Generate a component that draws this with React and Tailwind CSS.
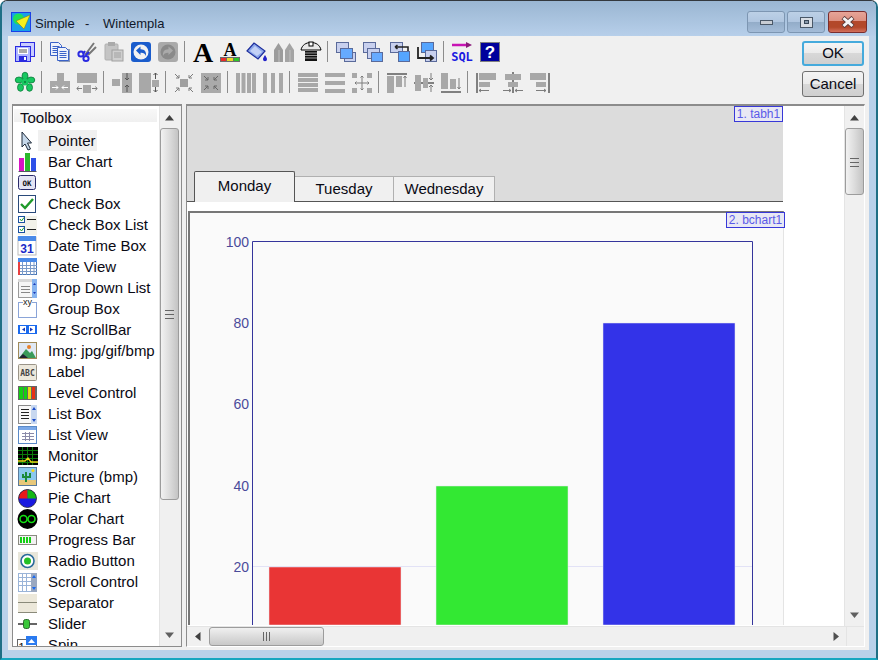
import React from "react";

const BLUE = "#2a2ae0";
const GR = "#a8a8a8";
const DK = "#7c7c7c";

function Ico({ children, h = 20 }) {
  return (
    <svg width="20" height={h} viewBox={`0 0 20 ${h}`} className="shrink-0 overflow-visible">
      {children}
    </svg>
  );
}

function Sep() {
  return <div className="w-px bg-[#8c8c8c] ml-[6px] mr-[8px] self-stretch" />;
}

// ---- main toolbar icons ----
const Save = () => (
  <Ico>
    <rect x="5.5" y="0.5" width="14" height="14" fill="#c9ccff" stroke={BLUE} />
    <rect x="0.5" y="4.5" width="15" height="15" fill="#aeb6ff" stroke={BLUE} />
    <rect x="3" y="6" width="10" height="6" fill="#fff" />
    <path d="M4 8h8M4 10h8" stroke="#555" />
    <rect x="4" y="14" width="8" height="5" fill={BLUE} />
    <rect x="9" y="15" width="2" height="3" fill="#fff" />
  </Ico>
);
const Doc = ({ x, y }) => (
  <g>
    <path d={`M${x} ${y}h8l3 3v10h-11z`} fill="#eef2fb" stroke="#3a62c8" />
    <path d={`M${x + 2} ${y + 4}h7M${x + 2} ${y + 6}h7M${x + 2} ${y + 8}h7M${x + 2} ${y + 10}h7`} stroke="#3a62c8" />
  </g>
);
const Copy = () => (
  <Ico>
    <Doc x={0.5} y={0.5} />
    <rect x="9" y="7" width="11" height="13" fill="#8d9bb8" />
    <Doc x={7.5} y={5.5} />
  </Ico>
);
const Scissors = () => (
  <Ico>
    <path d="M8 13L17 1M11 13L19 5" stroke="#777" strokeWidth="2" />
    <path d="M8 9L6 12M12 10L9 13" stroke={BLUE} strokeWidth="2" />
    <circle cx="4" cy="12" r="2.6" fill="none" stroke={BLUE} strokeWidth="2" />
    <circle cx="9" cy="16.5" r="2.6" fill="none" stroke={BLUE} strokeWidth="2" />
  </Ico>
);
const Paste = () => (
  <Ico>
    <rect x="1" y="2" width="13" height="16" rx="1" fill="#c4c4c4" stroke="#b0b0b0" />
    <rect x="4" y="0" width="7" height="4" fill="#aaa" />
    <rect x="8" y="8" width="11" height="11" fill="#cfcfcf" stroke="#a0a0a0" />
    <path d="M10 11h7M10 13h7M10 15h7" stroke="#a0a0a0" />
  </Ico>
);
const Round = ({ bg, fg, flip }) => (
  <Ico>
    <rect width="20" height="20" rx="3" fill={bg} />
    <circle cx="10" cy="10" r="7.5" fill={flip ? "#8a8a8a" : "#f2f2f2"} />
    <g transform={flip ? "translate(20 0) scale(-1 1)" : undefined}>
      <path d="M5 8.5l4.5-4v2.8c4-.2 6 2.6 5.5 6.7-1-2.4-2.6-3.4-5.5-3.2v2.2z" fill={fg} />
    </g>
  </Ico>
);
const BigA = () => (
  <Ico>
    <text x="10" y="20" textAnchor="middle" fontFamily="'Liberation Serif',serif" fontWeight="700" fontSize="28" fill="#000">A</text>
  </Ico>
);
const ColorA = () => (
  <Ico>
    <text x="10" y="14" textAnchor="middle" fontFamily="'Liberation Serif',serif" fontWeight="700" fontSize="18" fill="#000">A</text>
    <rect x="0" y="15" width="20" height="5" fill="#6b6b6b" />
    <rect x="1" y="16" width="5" height="3" fill="#e82a2a" />
    <rect x="7" y="16" width="6" height="3" fill="#e8d82a" />
    <rect x="14" y="16" width="5" height="3" fill="#2ac82a" />
  </Ico>
);
const Bucket = () => (
  <Ico>
    <path d="M0 9L7 1l11 8-7 8z" fill="#8aa6ea" stroke="#1e2e9c" strokeWidth="1.2" />
    <path d="M3 9l5-5 7 6-5 4z" fill="#dbe4fb" opacity="0.7" />
    <path d="M18 13c-1.5 2.5-2 3.2-2 4.2a2 2 0 0 0 4 0c0-1-.5-1.7-2-4.2z" fill="#2222c8" />
  </Ico>
);
const Crayons = () => (
  <Ico>
    <path d="M0 20V8l4.500-7L9 8v12z" fill="#9c9c9c" />
    <path d="M11 20V8l4.500-7L20 8v12z" fill="#a4a4a4" />
    <path d="M5 8v12M16 8v12" stroke="#c0c0c0" />
  </Ico>
);
const Screw = () => (
  <Ico>
    <path d="M0 8c1-5 5-7.500 10-7.500S19 3 20 8z" fill="#e8e8e8" stroke="#000" />
    <rect x="8" y="0" width="4" height="4" fill="#fff" stroke="#000" />
    <rect x="4" y="9" width="12" height="10" fill="#111" />
    <path d="M4 11h12M4 13.500h12M4 16h12" stroke="#999" />
  </Ico>
);
const Win = ({ x, y, w = 12, h = 10, fill, stroke = "#5a6a9a" }) => (
  <rect x={x + 0.5} y={y + 0.5} width={w} height={h} fill={fill} stroke={stroke} />
);
const Layer1 = () => (
  <Ico>
    <Win x={0} y={0} fill="#c8d0ee" />
    <Win x={8} y={10} w={11} h={9} fill="#c8d0ee" />
    <Win x={4} y={6} fill="#66aaff" />
  </Ico>
);
const Layer2 = () => (
  <Ico>
    <Win x={0} y={0} fill="#c8d0ee" />
    <Win x={4} y={6} fill="#c8d0ee" />
    <Win x={8} y={10} w={11} h={9} fill="#66aaff" />
  </Ico>
);
const Layer3 = () => (
  <Ico>
    <Win x={0} y={0} fill="#c8d0ee" />
    <Win x={8} y={9} w={11} h={10} fill="#55a5ff" />
    <path d="M5 5h13v4M5 5l2.500-2M5 5l2.500 2" fill="none" stroke="#222" strokeWidth="1.6" />
  </Ico>
);
const Layer4 = () => (
  <Ico>
    <Win x={4} y={0} fill="#55a5ff" />
    <Win x={8} y={8} w={11} h={11} fill="#c8d0ee" />
    <path d="M1 5v11h14M13 13.500l3 2.500-3 2.500" fill="none" stroke="#222" strokeWidth="1.8" />
  </Ico>
);
const Sql = () => (
  <Ico>
    <path d="M0 3h15" stroke="#c814b4" strokeWidth="2.4" />
    <path d="M14 0l6 3-6 3z" fill="#8a1a7a" />
    <text x="10" y="19" textAnchor="middle" fontFamily="'DejaVu Sans Mono',monospace" fontWeight="700" fontSize="12" fill="#1a1ae0">SQL</text>
  </Ico>
);
const Help = () => (
  <Ico>
    <rect x="0.5" y="0.5" width="19" height="19" fill="#00009c" stroke="#808080" />
    <text x="10" y="16" textAnchor="middle" fontFamily="'Liberation Sans',sans-serif" fontWeight="700" fontSize="17" fill="#fff">?</text>
  </Ico>
);
const Flower = () => (
  <Ico>
    <g fill="#18c860" stroke="#0a7a3a" strokeWidth="0.8">
      <ellipse cx="10" cy="4" rx="3" ry="3.800" />
      <ellipse cx="16" cy="8" rx="3.800" ry="3" />
      <ellipse cx="14.500" cy="15.500" rx="3" ry="3.800" />
      <ellipse cx="5.500" cy="15.500" rx="3" ry="3.800" />
      <ellipse cx="4" cy="8" rx="3.800" ry="3" />
    </g>
    <circle cx="10" cy="10" r="3.500" fill="#18c860" />
    <circle cx="10" cy="10" r="1" fill="#0a7a3a" />
  </Ico>
);

// ---- gray layout icons ----
const Gray = ({ children }) => <Ico h={21}>{children}</Ico>;
const B = ({ x, y, w, h, f = GR }) => <rect x={x} y={y} width={w} height={h} fill={f} />;
const Ln = ({ d, c = DK, w = 1 }) => <path d={d} fill="none" stroke={c} strokeWidth={w} />;

const A1 = () => (
  <Gray>
    <B x={7} y={1} w={7} h={8} />
    <B x={0} y={9} w={20} h={12} />
    <Ln c="#fff" d="M2 15.500h6M6 13.500l2 2-2 2M18 15.500h-6M14 13.500l-2 2 2 2" />
  </Gray>
);
const A2 = () => (
  <Gray>
    <B x={0} y={1} w={20} h={10} />
    <B x={6} y={13} w={8} h={8} />
    <Ln d="M0 16.500h5M1.500 14.500l-1.500 2 1.500 2M15 16.500h5M18.500 14.500l1.500 2-1.500 2" />
  </Gray>
);
const A3 = () => (
  <Gray>
    <B x={0} y={7} w={8} h={7} />
    <B x={10} y={1} w={10} h={20} />
    <Ln c="#555" d="M15 1v7M13 6l2 2 2-2M15 20v-7M13 15l2-2 2 2" />
  </Gray>
);
const A4 = () => (
  <Gray>
    <B x={0} y={1} w={12} h={20} />
    <B x={13} y={8} w={7} h={7} />
    <Ln c="#555" d="M16.500 1v6M14.500 3l2-2 2 2M16.500 20v-5M14.500 18l2 2 2-2" />
  </Gray>
);
const A5 = () => (
  <Gray>
    <B x={6} y={7} w={8} h={8} f="#a0a0a0" />
    <Ln d="M1 2l4 4M5 3v3H2M19 2l-4 4M15 3v3h3M1 20l4-4M5 19v-3H2M19 20l-4-4M15 19v-3h3" />
  </Gray>
);
const A6 = () => (
  <Gray>
    <B x={0} y={1} w={20} h={20} f="#aaa" />
    <Ln c="#666" d="M3 4l4 4M7 5v3H4M17 4l-4 4M13 5v3h3M3 18l4-4M7 17v-3H4M17 18l-4-4M13 17v-3h3" />
  </Gray>
);
const Bars = ({ xs, w }) => (
  <Gray>
    {xs.map((x) => (
      <B key={x} x={x} y={1} w={w} h={20} />
    ))}
  </Gray>
);
const Rows = ({ ys, h }) => (
  <Gray>
    {ys.map((y) => (
      <B key={y} x={0} y={y} w={20} h={h} />
    ))}
  </Gray>
);
const Cross = () => (
  <Gray>
    <B x={0} y={1} w={5} h={5} />
    <B x={15} y={1} w={5} h={5} />
    <B x={0} y={16} w={5} h={5} />
    <B x={15} y={16} w={5} h={5} />
    <Ln d="M10 4v14M3 11h14M8.500 5.500L10 4l1.500 1.500M8.500 16.500L10 18l1.500-1.500M4.500 9.500L3 11l1.500 1.500M15.500 9.500L17 11l-1.500 1.500" />
  </Gray>
);
const Top = () => (
  <Gray>
    <B x={0} y={1} w={20} h={2} f="#808080" />
    <B x={0} y={4} w={7} h={17} />
    <B x={9} y={4} w={6} h={11} />
    <Ln d="M18 4v11M16.500 6L18 4l1.500 2" />
  </Gray>
);
const Mid = () => (
  <Gray>
    <B x={0} y={10} w={20} h={2} f="#808080" />
    <B x={1} y={3} w={6} h={16} />
    <B x={9} y={6} w={5} h={10} />
    <Ln d="M17 1v7M15 6l2 2 2-2M17 20v-7M15 15l2-2 2 2" />
  </Gray>
);
const Bot = () => (
  <Gray>
    <B x={0} y={19} w={20} h={2} f="#808080" />
    <B x={0} y={1} w={7} h={16} />
    <B x={9} y={7} w={6} h={10} />
    <Ln d="M18 6v11M16.500 15l1.500 2 1.500-2" />
  </Gray>
);
const Lft = () => (
  <Gray>
    <B x={0} y={1} w={2} h={20} f="#808080" />
    <B x={3} y={1} w={17} h={7} />
    <B x={3} y={10} w={11} h={5} />
    <Ln d="M3 18.500h10M5 17l-2 1.500 2 1.500" />
  </Gray>
);
const Ctr = () => (
  <Gray>
    <B x={9} y={0} w={2} h={21} f="#808080" />
    <B x={2} y={2} w={16} h={6} />
    <B x={5} y={10} w={10} h={5} />
    <Ln d="M0 18.500h8M6 17l2 1.500-2 1.500M20 18.500h-8M14 17l-2 1.500 2 1.500" />
  </Gray>
);
const Rgt = () => (
  <Gray>
    <B x={18} y={1} w={2} h={20} f="#808080" />
    <B x={0} y={1} w={16} h={7} />
    <B x={6} y={10} w={10} h={5} />
    <Ln d="M6 18.500h10M14 17l2 1.500-2 1.500" />
  </Gray>
);

// ---- toolbox icons ----
const tMono = "'DejaVu Sans Mono',monospace";
const Tools = [
  ["Pointer", <path key="p" d="M5 1v15l3-3 3 6 2.500-1-3-6h4z" fill="#c6d8ea" stroke="#1e2a3a" />],
  ["Bar Chart", <g key="p"><B x={2} y={6} w={5} h={13} f="#d814c4" /><B x={8} y={1} w={5} h={18} f="#2cb82c" /><B x={14} y={6} w={5} h={13} f="#2e50e8" /><Ln c="#556" d="M1.500 19.500h18" /></g>],
  ["Button", <g key="p"><rect x="1.500" y="2.500" width="17" height="14" rx="2" fill="#e4e4f4" stroke="#2a2a6a" /><text x="10" y="12.500" textAnchor="middle" fontFamily={tMono} fontWeight="700" fontSize="7.500" fill="#111">OK</text></g>],
  ["Check Box", <g key="p"><rect x="1.500" y="1.500" width="17" height="17" fill="#fff" stroke="#2a4a7a" /><path d="M4 10l4 4 8-9" fill="none" stroke="#1f9a2a" strokeWidth="2.400" /></g>],
  ["Check Box List", <g key="p"><B x={1} y={1} w={19} h={19} f="#f2f2ea" /><rect x="1.500" y="1.500" width="6" height="6" fill="#fff" stroke="#1a50a0" /><rect x="1.500" y="11.500" width="6" height="6" fill="#fff" stroke="#1a50a0" /><path d="M3 4l1.500 2L7 2.500M3 14l1.500 2L7 12.500" fill="none" stroke="#1a9a2a" /><path d="M10 4.500h9M10 14.500h9" stroke="#222" /></g>],
  ["Date Time Box", <g key="p"><rect x="1" y="1" width="18" height="18" fill="#fff" stroke="#bbb" /><B x={1} y={0} w={18} h={5} f="#4a8ae8" /><text x="10" y="17" textAnchor="middle" fontFamily="'Liberation Sans',sans-serif" fontWeight="700" fontSize="12" fill="#1a2ac8">31</text></g>],
  ["Date View", <g key="p"><rect x="1.500" y="1.500" width="18" height="16" fill="#fff" stroke="#4a78b8" /><B x={1} y={1} w={19} h={4} f="#4a8ae8" /><Ln c="#7a9ac8" d="M1 8.500h19M1 11.500h19M1 14.500h19M5.500 5v13M9.500 5v13M13.500 5v13M17 5v13" /><B x={1} y={5} w={2} h={13} f="#e84040" /></g>],
  ["Drop Down List", <g key="p"><rect x="1.500" y="3.500" width="18" height="16" fill="#f6f6f6" stroke="#9a9a9a" /><B x={1} y={1} w={19} h={3} f="#d8d8d8" /><Ln c="#888" d="M4 8.500h9M4 11.500h9M4 14.500h9" /><B x={15} y={1} w={5} h={19} f="#86b4f0" /><path d="M16 7l1.500-2 1.500 2zM16 14l1.500 2 1.500-2z" fill="#1a3ab8" /></g>],
  ["Group Box", <g key="p"><rect x="1.500" y="3.500" width="18" height="15" fill="#fff" stroke="#8aa4d8" /><rect x="6" y="0" width="9" height="7" fill="#fff" /><text x="10.500" y="6" textAnchor="middle" fontFamily="'Liberation Sans',sans-serif" fontSize="9" fill="#222">xy</text></g>],
  ["Hz ScrollBar", <g key="p"><B x={1} y={5} w={19} h={9} f="#1a6aee" /><B x={3} y={6} w={6} h={7} f="#fff" /><B x={12} y={6} w={6} h={7} f="#fff" /><path d="M8 7.500v4l-3-2zM13 7.500v4l3-2z" fill="#1a3ab8" /></g>],
  ["Img: jpg/gif/bmp", <g key="p"><rect x="1.500" y="1.500" width="18" height="16" fill="#dfe8f4" stroke="#a08a58" /><path d="M2 17l7-9 4 4 2-2 4 7z" fill="#3a9a5a" /><path d="M2 17l4-4 5 4z" fill="#223" /><circle cx="12" cy="6" r="2" fill="#e8802a" /></g>],
  ["Label", <g key="p"><rect x="1.500" y="2.500" width="18" height="16" rx="1" fill="#ece8dc" stroke="#9a9488" /><text x="10.500" y="14" textAnchor="middle" fontFamily={tMono} fontSize="8" fontWeight="700" fill="#444">ABC</text></g>],
  ["Level Control", <g key="p"><B x={1} y={3} w={19} h={14} f="#666" /><B x={2} y={4} w={4} h={12} f="#14d014" /><B x={7} y={4} w={3} h={12} f="#14d014" /><B x={11} y={4} w={3} h={12} f="#e8d814" /><B x={15} y={4} w={3} h={12} f="#e83014" /></g>],
  ["List Box", <g key="p"><rect x="1.500" y="1.500" width="18" height="18" fill="#f8f8f8" stroke="#8a8a8a" /><Ln c="#222" d="M4 5.500h8M4 8.500h8M4 11.500h8M4 14.500h8" /><B x={14} y={1} w={6} h={19} f="#c8d8f0" /><path d="M15 6l2-3 2 3zM15 15l2 3 2-3z" fill="#1a4ac8" /></g>],
  ["List View", <g key="p"><rect x="1.500" y="1.500" width="18" height="17" fill="#fff" stroke="#5a8ac8" /><B x={2} y={2} w={17} h={3} f="#7aa8e8" /><Ln c="#8a8aa8" d="M5 8.500h12M5 11.500h12M5 14.500h12M8.500 7v9M12.500 7v9" /></g>],
  ["Monitor", <g key="p"><B x={1} y={1} w={20} h={18} f="#000" /><Ln c="#0a7a0a" d="M1 4.500h20M1 8.500h20M1 12.500h20M1 16.500h20M5.500 1v18M10.500 1v18M15.500 1v18" /><Ln c="#e8d814" w={1.300} d="M1 15h7l3-3 3 4h7" /></g>],
  ["Picture (bmp)", <g key="p"><rect x="1.500" y="0.500" width="18" height="18" fill="#8ac8ee" stroke="#5a7a9a" /><B x={2} y={13} w={17} h={5} f="#e8c87a" /><path d="M9 15V5M6 7v3h3M13 6v4H9" fill="none" stroke="#1a8a3a" strokeWidth="2" /><circle cx="16" cy="3.500" r="1.500" fill="#f8d81a" /></g>],
  ["Pie Chart", <g key="p"><circle cx="10.500" cy="10.500" r="9" fill="#1a1ae0" /><path d="M10.500 10.500V1.500A9 9 0 0 0 1.500 10.500z" fill="#e81a1a" /><path d="M10.500 10.500V1.500A9 9 0 0 1 19.500 10.500z" fill="#14b814" /><circle cx="10.500" cy="10.500" r="9" fill="none" stroke="#223" strokeWidth="0.800" /></g>],
  ["Polar Chart", <g key="p"><circle cx="10.500" cy="10" r="10" fill="#000" /><circle cx="6.500" cy="10" r="3.500" fill="none" stroke="#14e014" strokeWidth="1.600" /><circle cx="14.500" cy="10" r="3.500" fill="none" stroke="#14e014" strokeWidth="1.600" /></g>],
  ["Progress Bar", <g key="p"><rect x="1.500" y="5.500" width="18" height="9" fill="#f2f2f2" stroke="#8a8a80" /><B x={3} y={7} w={2} h={6} f="#14d014" /><B x={6} y={7} w={2} h={6} f="#14d014" /><B x={9} y={7} w={2} h={6} f="#14d014" /><B x={12} y={7} w={2} h={6} f="#14d014" /></g>],
  ["Radio Button", <g key="p"><B x={1} y={1} w={20} h={18} f="#e8e6da" /><circle cx="10.500" cy="10" r="6.500" fill="#fff" stroke="#2a6a9a" strokeWidth="1.600" /><circle cx="10.500" cy="10" r="3.500" fill="#24c024" /></g>],
  ["Scroll Control", <g key="p"><rect x="1.500" y="1.500" width="18" height="18" fill="#fff" stroke="#9ab4d8" /><Ln c="#9ab4d8" d="M2 5.500h12M2 9.500h12M2 13.500h12M5.500 2v17M9.500 2v17" /><B x={14} y={1} w={6} h={19} f="#9aa8c0" /><path d="M15 6l2-3 2 3zM15 15l2 3 2-3z" fill="#1a6af0" /></g>],
  ["Separator", <g key="p"><B x={1} y={1} w={19} h={18} f="#ece8da" /><Ln c="#8a8a7a" d="M1 9.500h19" /><Ln c="#8a8a7a" d="M1 19.500h19" /></g>],
  ["Slider", <g key="p"><Ln c="#333" w={1.500} d="M1 10h19" /><rect x="6.500" y="5.500" width="6" height="9" rx="2" fill="#3ac83a" stroke="#2a6a2a" /></g>],
  ["Spin", <g key="p"><rect x="0.500" y="4.500" width="19" height="15" fill="#fff" stroke="#666" /><text x="4.500" y="17" textAnchor="middle" fontFamily="'Liberation Sans',sans-serif" fontSize="12" fill="#111">1</text><B x={9} y={1} w={11} h={9} f="#2a7af0" /><path d="M11 8l3.500-4 3.500 4z" fill="#fff" /></g>],
];

// ---- scrollbar pieces ----
const TriUp = () => <svg width="9" height="6" viewBox="0 0 9 6"><path d="M4.500 0L9 5.500H0z" fill="#404040" /></svg>;
const TriDown = () => <svg width="9" height="6" viewBox="0 0 9 6"><path d="M4.500 6L9 .5H0z" fill="#606060" /></svg>;
const TriLeft = () => <svg width="6" height="9" viewBox="0 0 6 9"><path d="M0 4.500L5.500 0v9z" fill="#404040" /></svg>;
const TriRight = () => <svg width="6" height="9" viewBox="0 0 6 9"><path d="M6 4.500L.5 0v9z" fill="#505050" /></svg>;

function VThumb({ h, grip }) {
  return (
    <div className={`mx-auto w-[19px] ${h} border border-[#9c9c9c] rounded-[3px] bg-gradient-to-r from-[#f2f2f2] via-[#dcdcdc] to-[#c4c4c4] flex flex-col items-center ${grip}`}>
      <div className="w-[9px] h-[9px] flex flex-col justify-between">
        <div className="h-px bg-[#666]" />
        <div className="h-px bg-[#666]" />
        <div className="h-px bg-[#666]" />
      </div>
    </div>
  );
}

function VScroll({ thumb, grip, className }) {
  return (
    <div className={`bg-[#f0f0f0] flex flex-col ${className}`}>
      <div className="h-[22px] shrink-0 flex items-center justify-center pt-[2px]"><TriUp /></div>
      <VThumb h={thumb} grip={grip} />
      <div className="flex-1" />
      <div className="h-[22px] shrink-0 flex items-center justify-center"><TriDown /></div>
    </div>
  );
}

function WinBtn({ className, children }) {
  return (
    <div className={`h-[22px] rounded-[3px] border flex items-center justify-center ${className}`}>
      {children}
    </div>
  );
}

function Tab({ active, className, children }) {
  return (
    <div
      className={
        active
          ? `h-[31px] -mb-px bg-[#f0f0f0] border border-b-0 border-[#555] rounded-t-[2px] flex items-start justify-center pt-[5px] leading-[18px] ${className}`
          : `h-[25px] bg-[#f0f0f0] border-t border-r border-[#b0b0b0] flex items-center justify-center ${className}`
      }
    >
      {children}
    </div>
  );
}

function Chart() {
  const ticks = [
    [100, 241.5],
    [80, 323],
    [60, 404],
    [40, 485.5],
    [20, 567],
  ];
  const bars = [
    [269, 567, "#e93535"],
    [436, 486, "#33e833"],
    [603, 323, "#3333e8"],
  ];
  return (
    <svg width="594" height="412" viewBox="190 213 594 412" className="block">
      <path d="M253 566.500H752" stroke="#e2e2f6" />
      <path d="M252.500 625V241.500H752.500V625" fill="none" stroke="#35359c" />
      {ticks.map(([v, y]) => (
        <text key={v} x="249" y={y + 5} textAnchor="end" fontSize="14" fill="#4a4a9a" fontFamily="'Liberation Sans',sans-serif">{v}</text>
      ))}
      {bars.map(([x, y, c]) => (
        <rect key={x} x={x} y={y} width="132" height={625 - y} fill={c} stroke="#e8e8ee" strokeWidth="0.500" />
      ))}
    </svg>
  );
}

export default function App() {
  return (
    <div className="w-[878px] h-[660px] flex flex-col rounded-t-[7px] border-t border-x-2 border-b-2 border-t-[#33383d] border-x-[#1f6f85] border-b-[#16a6c0] bg-[#b9d1ea] overflow-hidden font-['Liberation_Sans',Arial,sans-serif] text-[15px] text-[#0a0a14]">
      {/* title bar */}
      <div className="h-[35px] shrink-0 flex bg-gradient-to-b from-[#9ab6d2] to-[#b7cfea] pl-[9px] pr-[9px]">
        <div className="mt-[11px] w-[20px] h-[20px] shrink-0">
          <svg width="20" height="20" viewBox="0 0 20 20">
            <rect width="20" height="20" fill="#1a40e8" />
            <rect x="1" y="1" width="18" height="18" fill="#18a0e8" />
            <circle cx="7.500" cy="7" r="5.500" fill="#1ee05a" />
            <path d="M19 3L5 9l8 8z" fill="#f5f01e" stroke="#807010" strokeWidth="0.500" />
          </svg>
        </div>
        <div className="mt-[15px] ml-[4px] text-[13px] leading-[16px] text-[#10182a] flex">
          <span className="w-[50px]">Simple</span>
          <span className="w-[18px]">-</span>
          <span>Wintempla</span>
        </div>
        <div className="ml-auto flex mt-[10px] mb-auto">
          <WinBtn className="w-[38px] mr-[2px] border-[#7d96b2] bg-[linear-gradient(180deg,#bcd0e6_0%,#b0c6e0_48%,#92acc8_50%,#a4bcd8_100%)]">
            <div className="w-[13px] h-[5px] bg-[#c8cdd4] border border-[#4a5868]" />
          </WinBtn>
          <WinBtn className="w-[38px] mr-[3px] border-[#7d96b2] bg-[linear-gradient(180deg,#bcd0e6_0%,#b0c6e0_48%,#92acc8_50%,#a4bcd8_100%)]">
            <div className="w-[13px] h-[11px] bg-[#d8dde4] border border-[#4a5868] flex items-center justify-center">
              <div className="w-[5px] h-[4px] border border-[#3a4858] bg-[#8a9aac]" />
            </div>
          </WinBtn>
          <WinBtn className="w-[39px] border-[#7a2e2e] bg-[linear-gradient(180deg,#e6a498_0%,#dd9182_44%,#b3482a_46%,#b3482a_76%,#d4705c_100%)]">
            <svg width="14" height="12" viewBox="0 0 14 12">
              <path d="M2 1.500L12 10.500M12 1.500L2 10.500" stroke="#5a3a3a" strokeWidth="4.500" />
              <path d="M2.500 2L11.500 10M11.500 2L2.500 10" stroke="#f4f4f4" strokeWidth="3" />
            </svg>
          </WinBtn>
        </div>
      </div>

      {/* client area */}
      <div className="flex-1 min-h-0 ml-[6px] mr-[7px] mb-[8px] bg-[#f0f0f0] flex flex-col">
        <div className="h-[68px] shrink-0 flex">
          <div className="pl-[7px] pt-[5px] flex flex-col gap-[9px]">
            <div className="flex h-[21px] items-center">
              <div className="flex items-start self-stretch pt-px"><Save /></div>
              <Sep />
              <div className="flex gap-[7px] pt-px self-stretch"><Copy /><Scissors /><Paste /><Round bg="#1a5ccc" fg="#1a5ccc" /><Round bg="#aaaaaa" fg="#aaaaaa" flip /></div>
              <Sep />
              <div className="flex gap-[7px] pt-px self-stretch"><BigA /><ColorA /><Bucket /><Crayons /><Screw /></div>
              <Sep />
              <div className="flex gap-[7px] pt-px self-stretch"><Layer1 /><Layer2 /><Layer3 /><Layer4 /></div>
              <Sep />
              <div className="flex gap-[8px] pt-px self-stretch"><Sql /><Help /></div>
            </div>
            <div className="flex h-[22px] items-center">
              <Flower />
              <Sep />
              <div className="flex gap-[7px]"><A1 /><A2 /></div>
              <Sep />
              <div className="flex gap-[7px]"><A3 /><A4 /></div>
              <Sep />
              <div className="flex gap-[7px]"><A5 /><A6 /></div>
              <Sep />
              <div className="flex gap-[7px]"><Bars xs={[0, 5.5, 11, 16]} w={4} /><Bars xs={[0, 8, 16]} w={4} /></div>
              <Sep />
              <div className="flex gap-[7px]"><Rows ys={[1, 6, 11, 16]} h={4} /><Rows ys={[1, 9, 17]} h={4} /><Cross /></div>
              <Sep />
              <div className="flex gap-[7px]"><Top /><Mid /><Bot /></div>
              <Sep />
              <div className="flex gap-[7px]"><Lft /><Ctr /><Rgt /></div>
            </div>
          </div>
          <div className="ml-auto mr-[5px] w-[62px] pt-[5px] flex flex-col gap-[5px]">
            <div className="h-[25px] rounded-[3px] border-2 border-[#45aadc] bg-[linear-gradient(180deg,#f4f4f4_0%,#ebebeb_48%,#d8d8d8_50%,#cfcfcf_100%)] flex items-center justify-center">OK</div>
            <div className="h-[26px] rounded-[3px] border border-[#707070] bg-[linear-gradient(180deg,#f4f4f4_0%,#ebebeb_48%,#d8d8d8_50%,#cfcfcf_100%)] flex items-center justify-center">Cancel</div>
          </div>
        </div>

        {/* panels */}
        <div className="h-[543px] shrink-0 flex ml-[4px] gap-[4px]">
          {/* toolbox */}
          <div className="w-[170px] border border-t-2 border-[#8c8c8c] bg-white flex overflow-hidden">
            <div className="w-[147px] min-w-0 overflow-hidden">
              <div className="h-[24px] pt-[9px] pl-px">
                <div className="h-[13px] bg-gradient-to-b from-[#f8f8f8] to-[#f0f0f0] w-[143px] pl-[6px]">
                  <div className="-mt-[6px] leading-[18px]">Toolbox</div>
                </div>
              </div>
              {Tools.map(([name, icon], i) => (
                <div key={name} className="h-[21px] flex items-center pl-[4px]">
                  <svg width="21" height="20" viewBox="0 0 21 20" className="shrink-0 overflow-visible">{icon}</svg>
                  <span className={`leading-[21px] whitespace-nowrap ${i === 0 ? "bg-[#f0f0f0] pl-[10px] pr-[1px]" : "ml-[10px]"}`}>{name}</span>
                </div>
              ))}
            </div>
            <VScroll thumb="h-[372px]" grip="pt-[181px]" className="flex-1 border-l border-[#e4e4e4] pr-[2px]" />
          </div>

          {/* form area */}
          <div className="w-[679px] border border-t-2 border-l-[#8c8c8c] border-t-[#8c8c8c] border-r-white border-b-white bg-white flex flex-col overflow-hidden">
            <div className="flex h-[520px] shrink-0">
              <div className="w-[657px] shrink-0 overflow-hidden">
                <div className="relative w-[596px] h-[96px] bg-[#dcdcdc] border-b border-[#555] flex items-end pl-[7px]">
                  <Tab active className="w-[101px]">Monday</Tab>
                  <Tab className="w-[99px]">Tuesday</Tab>
                  <Tab className="w-[101px]">Wednesday</Tab>
                  <div className="absolute top-0 right-0 h-[16px] w-[49px] border border-[#3838d8] bg-[#e8e8f4] text-[12px] leading-[14px] text-center text-[#5a5ae8]">1. tabh1</div>
                </div>
                <div className="relative mt-[9px] ml-px w-[596px] h-[414px] border-t-2 border-l-2 border-r border-t-[#777] border-l-[#777] border-r-[#e4e4e4] bg-[#fafafa]">
                  <Chart />
                  <div className="absolute -top-px -right-[2px] h-[16px] w-[59px] border border-[#3838d8] bg-[#e8e8f4] text-[12px] leading-[14px] text-center text-[#5a5ae8]">2. bchart1</div>
                </div>
              </div>
              <VScroll thumb="h-[67px]" grip="pt-[29px]" className="flex-1 border-l border-[#e4e4e4] pr-[1px]" />
            </div>
            <div className="h-[20px] shrink-0 bg-[#f0f0f0] flex items-center border-t border-[#e4e4e4]">
              <div className="w-[22px] flex justify-center"><TriLeft /></div>
              <div className="w-[115px] h-[19px] border border-[#9c9c9c] rounded-[3px] bg-gradient-to-b from-[#f0f0f0] to-[#c8c8c8] flex items-center justify-center gap-[2px]">
                <div className="w-px h-[9px] bg-[#666]" />
                <div className="w-px h-[9px] bg-[#666]" />
                <div className="w-px h-[9px] bg-[#666]" />
              </div>
              <div className="ml-[505px] w-[14px] flex justify-center"><TriRight /></div>
              <div className="ml-[3px] flex-1 self-stretch border-l border-[#e4e4e4]" />
            </div>
          </div>
        </div>
      </div>
    </div>
  );
}
